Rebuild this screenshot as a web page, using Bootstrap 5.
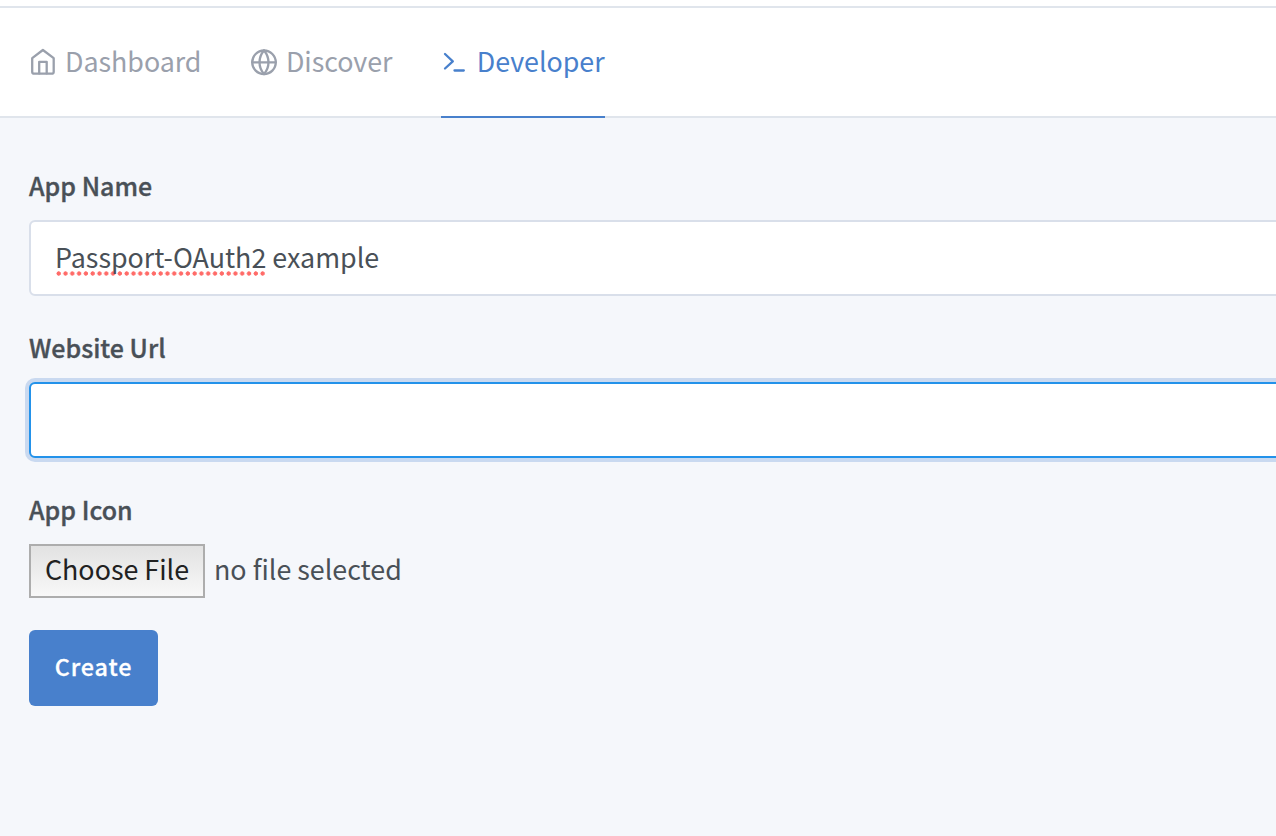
<!DOCTYPE html>
<html lang="en">
<head>
<meta charset="utf-8">
<meta name="viewport" content="width=device-width, initial-scale=1">
<title>Developer</title>
<link rel="stylesheet" href="https://cdn.jsdelivr.net/npm/bootstrap@5.3.0/dist/css/bootstrap.min.css">
<style>
body { background: #f5f7fb; color: #495057; font-family: "Noto Sans CJK SC", sans-serif; font-size: 26.85px; line-height: 44px; overflow: hidden; }
.topbar { height: 112px; margin-top: 6px; padding-left: 29px; background: #fff; border-top: 2px solid #e0e5ec; border-bottom: 2px solid #e0e5ec; }
.page-top { background: #fff; display: flow-root; }
.topbar .nav { height: 110px; gap: 48.4px; }
.topbar .nav-link { height: 110px; padding: 0; color: #9aa0ac; border-bottom: 2px solid transparent; white-space: nowrap; }
.topbar .nav-link.active { color: #4880cc; border-color: #4880cc; }
.topbar .nav-link span { padding-bottom: 2px; letter-spacing: -.03px; }
.topbar svg { flex: none; fill: none; stroke: currentColor; stroke-width: 2.3; stroke-linecap: round; stroke-linejoin: round; }
.app-form { width: 1300px; padding: 45px 0 0 29px; }
.form-label { display: block; font-size: 25px; font-weight: 500; line-height: 44px; margin: 0 0 13px; -webkit-text-stroke: .35px currentColor; }
.form-control { height: 76px; font-size: 26.85px; line-height: 44px; padding: 13px 24px; border: 2px solid #d9dfea; border-radius: 6px; color: #495057; }
.form-control.focused { border-color: #2392ea; box-shadow: 0 0 0 4px rgba(70,127,207,.25); }
.field { margin-bottom: 29px; }
.misspelt { display: inline-block; height: 44px; background: radial-gradient(circle at 3.6px 2.5px, #ff6b68 1.9px, transparent 2.4px) 0 36px / 6.8px 5px repeat-x; }
.choose { width: 176px; height: 54px; border: 2px solid #adadad; background: linear-gradient(#e2e2e2, #f8f8f8); color: #212121; padding: 0 0 4px; font: inherit; line-height: 44px; }
.t-none { margin-left: 9px; padding-bottom: 5px; }
.btn-create { display: block; margin-top: 32px; width: 129px; height: 76px; border: 0; border-radius: 6px; background: #4880cc; font-size: 23.3px; font-weight: 500; letter-spacing: .9px; padding: 0 0 3px; -webkit-text-stroke: .3px currentColor; }
</style>
</head>
<body>
<div class="page-top">
<header class="topbar">
  <nav class="nav flex-nowrap">
    <a class="nav-link d-flex align-items-center" href="#"><svg width="28" height="28" viewBox="0 0 28 28" class="me-2"><path d="M3.2 10.2 13.9 2l10.8 8.2v13.5a2 2 0 0 1-2 2H5.2a2 2 0 0 1-2-2z"/><path d="M10.2 25.4V13.8h7.5v11.6"/></svg><span>Dashboard</span></a>
    <a class="nav-link d-flex align-items-center" href="#"><svg width="28" height="28" viewBox="0 0 28 28" class="me-2"><circle cx="14" cy="14.3" r="11.8"/><path d="M2.2 14.3h23.6M14 2.5c6 7 6 16.6 0 23.6M14 2.5c-6 7-6 16.6 0 23.6"/></svg><span>Discover</span></a>
    <a class="nav-link active d-flex align-items-center" href="#"><svg width="28" height="28" viewBox="0 0 28 28" class="me-2"><path d="m4 6 7.8 7.4L4 20.5M13.5 22.5h9.3"/></svg><span>Developer</span></a>
  </nav>
</header>
</div>
<main class="app-form">
  <div class="field">
    <span class="form-label">App Name</span>
    <div class="form-control" role="textbox"><span class="misspelt">Passport-OAuth2</span> example</div>
  </div>
  <div class="field">
    <label class="form-label" for="url">Website Url</label>
    <input class="form-control focused" id="url" type="text">
  </div>
  <div class="field">
    <span class="form-label">App Icon</span>
    <div class="d-flex align-items-center"><button class="choose" type="button">Choose File</button><span class="t-none">no file selected</span></div>
  </div>
  <button class="btn btn-primary btn-create" type="button">Create</button>
</main>
<script src="https://cdn.jsdelivr.net/npm/bootstrap@5.3.0/dist/js/bootstrap.bundle.min.js"></script>
</body>
</html>
